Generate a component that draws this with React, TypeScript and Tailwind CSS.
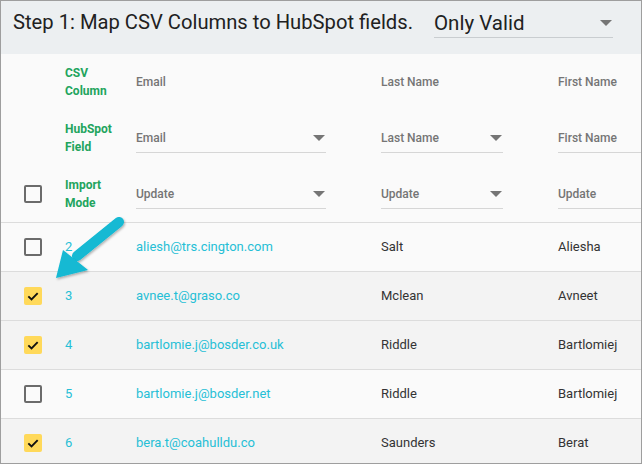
import React from "react";

type Row = {
  id: number;
  email: string;
  last: string;
  first: string;
  checked: boolean;
};

const rows: Row[] = [
  { id: 2, email: "aliesh@trs.cington.com", last: "Salt", first: "Aliesha", checked: false },
  { id: 3, email: "avnee.t@graso.co", last: "Mclean", first: "Avneet", checked: true },
  { id: 4, email: "bartlomie.j@bosder.co.uk", last: "Riddle", first: "Bartlomiej", checked: true },
  { id: 5, email: "bartlomie.j@bosder.net", last: "Riddle", first: "Bartlomiej", checked: false },
  { id: 6, email: "bera.t@coahulldu.co", last: "Saunders", first: "Berat", checked: true },
];

const Caret = ({ className = "" }: { className?: string }) => (
  <svg width="12" height="6" viewBox="0 0 12 6" className={className}>
    <path d="M0 0 L12 0 L6 6 Z" fill="#757575" />
  </svg>
);

const Checkbox = ({ checked }: { checked: boolean }) =>
  checked ? (
    <div className="w-[18px] h-[18px] rounded-[2px] bg-[#ffd95a] flex items-center justify-center">
      <svg width="14" height="14" viewBox="0 0 24 24">
        <path d="M4 12.5 L9.5 18 L20 7" fill="none" stroke="#111" strokeWidth="3.2" />
      </svg>
    </div>
  ) : (
    <div className="w-[18px] h-[18px] rounded-[2px] border-2 border-[#6b6b6b]" />
  );

// underline-style select used in the mapping header
const MiniSelect = ({ label, width, caret = true }: { label: string; width: string; caret?: boolean }) => (
  <div className={`${width} h-[30px] flex items-center justify-between border-b border-[#d6d6d6] pr-[1px]`}>
    <span className="text-[12px] font-medium text-[#757575] whitespace-nowrap">{label}</span>
    {caret && <Caret />}
  </div>
);

const GreenLabel = ({ a, b }: { a: string; b: string }) => (
  <div className="text-[12px] font-bold leading-[18px] text-[#22a45d]">
    <div>{a}</div>
    <div>{b}</div>
  </div>
);

export default function App() {
  return (
    <div className="relative w-[642px] h-[464px] overflow-hidden border border-[#9e9e9e] bg-[#fafafa] font-['Roboto',sans-serif]">
      {/* top bar */}
      <div className="h-[53px] bg-[#eceff1] flex items-start pl-[12px] pt-[8px]">
        <div className="shrink-0 text-[20.2px] text-[#212121] leading-[26px] whitespace-nowrap">
          Step 1: Map CSV Columns to HubSpot fields.
        </div>
        <div className="shrink-0 ml-[21px] w-[179px] h-[29px] flex items-center justify-between border-b border-[#c9cdd0] pr-[1px]">
          <span className="text-[20.5px] text-[#212121] leading-[26px]">Only Valid</span>
          <Caret />
        </div>
      </div>

      {/* mapping header */}
      <div className="flex h-[56px] items-center">
        <div className="w-[64px] shrink-0" />
        <div className="w-[71px] shrink-0">
          <GreenLabel a="CSV" b="Column" />
        </div>
        <div className="w-[245px] shrink-0 text-[12px] font-medium text-[#757575]">Email</div>
        <div className="w-[177px] shrink-0 text-[12px] font-medium text-[#757575]">Last Name</div>
        <div className="flex-1 whitespace-nowrap text-[12px] font-medium text-[#757575]">First Name</div>
      </div>
      <div className="flex h-[56px] items-center">
        <div className="w-[64px] shrink-0" />
        <div className="w-[71px] shrink-0">
          <GreenLabel a="HubSpot" b="Field" />
        </div>
        <div className="w-[245px] shrink-0">
          <MiniSelect label="Email" width="w-[190px]" />
        </div>
        <div className="w-[177px] shrink-0">
          <MiniSelect label="Last Name" width="w-[122px]" />
        </div>
        <div className="flex-1">
          <MiniSelect label="First Name" width="w-[120px]" caret={false} />
        </div>
      </div>
      <div className="flex h-[57px] items-center border-b border-[#dcdcdc]">
        <div className="w-[64px] shrink-0 pl-[23px]">
          <Checkbox checked={false} />
        </div>
        <div className="w-[71px] shrink-0">
          <GreenLabel a="Import" b="Mode" />
        </div>
        <div className="w-[245px] shrink-0">
          <MiniSelect label="Update" width="w-[190px]" />
        </div>
        <div className="w-[177px] shrink-0">
          <MiniSelect label="Update" width="w-[122px]" />
        </div>
        <div className="flex-1">
          <MiniSelect label="Update" width="w-[120px]" caret={false} />
        </div>
      </div>

      {/* data rows */}
      {rows.map((r) => (
        <div
          key={r.id}
          className={`flex h-[49px] items-center border-b border-[#dcdcdc] text-[13px] ${
            r.checked ? "bg-[#f3f3f3]" : "bg-[#fafafa]"
          }`}
        >
          <div className="w-[64px] shrink-0 pl-[23px]">
            <Checkbox checked={r.checked} />
          </div>
          <div className="w-[71px] shrink-0 text-[#26bfd6]">{r.id}</div>
          <div className="w-[245px] shrink-0 text-[#26bfd6]">{r.email}</div>
          <div className="w-[177px] shrink-0 text-[#333]">{r.last}</div>
          <div className="flex-1 text-[#333]">{r.first}</div>
        </div>
      ))}

      {/* callout arrow */}
      <svg className="absolute left-[40px] top-[205px]" width="100" height="80" viewBox="0 0 100 80">
        <defs>
          <filter id="sh" x="-20%" y="-20%" width="140%" height="140%">
            <feDropShadow dx="1" dy="1.5" stdDeviation="1.2" floodColor="#000" floodOpacity="0.3" />
          </filter>
        </defs>
        <g filter="url(#sh)">
          <line x1="78" y1="16" x2="36" y2="50" stroke="#12b9d3" strokeWidth="10" strokeLinecap="round" />
          <path d="M15 72 L22 44 L47 64 Z" fill="#12b9d3" />
        </g>
      </svg>
    </div>
  );
}
